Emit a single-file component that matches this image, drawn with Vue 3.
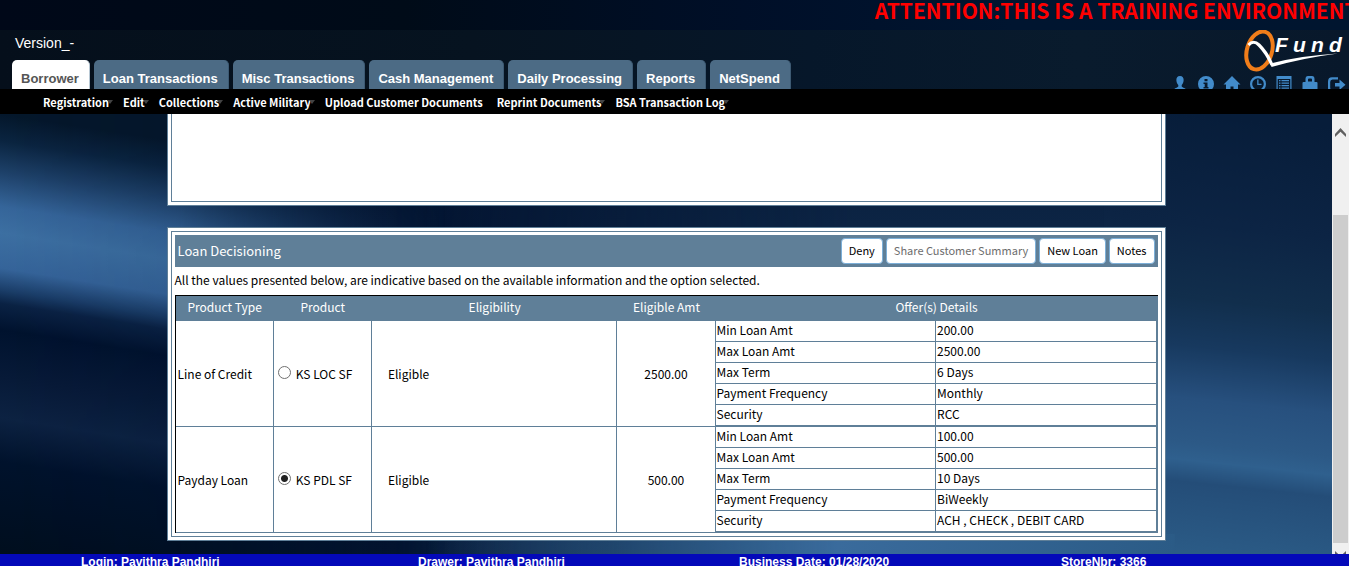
<script setup>
import { ref } from 'vue'

const tabs = ['Borrower', 'Loan Transactions', 'Misc Transactions', 'Cash Management', 'Daily Processing', 'Reports', 'NetSpend']
const menu = [
  { label: 'Registration', arrow: true },
  { label: 'Edit', arrow: true },
  { label: 'Collections', arrow: true },
  { label: 'Active Military', arrow: true },
  { label: 'Upload Customer Documents', arrow: false },
  { label: 'Reprint Documents', arrow: true },
  { label: 'BSA Transaction Log', arrow: true }
]
const columns = ['Product Type', 'Product', 'Eligibility', 'Eligible Amt', 'Offer(s) Details']
const loans = [
  {
    type: 'Line of Credit', product: 'KS LOC SF', status: 'Eligible', amount: '2500.00',
    offers: [['Min Loan Amt', '200.00'], ['Max Loan Amt', '2500.00'], ['Max Term', '6 Days'], ['Payment Frequency', 'Monthly'], ['Security', 'RCC']]
  },
  {
    type: 'Payday Loan', product: 'KS PDL SF', status: 'Eligible', amount: '500.00',
    offers: [['Min Loan Amt', '100.00'], ['Max Loan Amt', '500.00'], ['Max Term', '10 Days'], ['Payment Frequency', 'BiWeekly'], ['Security', 'ACH , CHECK , DEBIT CARD']]
  }
]
const selected = ref('KS PDL SF')
const session = ['Login: Pavithra Pandhiri', 'Drawer: Pavithra Pandhiri', 'Business Date: 01/28/2020', 'StoreNbr: 3366']
</script>

<template>
  <div class="page">
    <header class="top">
      <div class="notice"><span>ATTENTION:THIS IS A TRAINING ENVIRONMENT</span></div>
      <div class="bar">
        <div class="bar-left">
          <div class="version">Version_-</div>
          <nav class="tabs">
            <a v-for="(t, i) in tabs" :key="t" href="#" class="tab" :class="{ active: i === 0 }">{{ t }}</a>
          </nav>
        </div>
        <div class="bar-right">
          <svg class="logo" viewBox="0 0 110 42" width="110" height="42" role="img" aria-label="QFund">
            <ellipse cx="20.500" cy="20.500" rx="12.500" ry="19.500" transform="rotate(17 20.5 20.5)" fill="none" stroke="#f07d1a" stroke-width="4" />
            <path d="M9.500 15Q14.500 9.500 20 15Q28 23 33 35" fill="none" stroke="#fff" stroke-width="3.200" />
            <path d="M31.500 33.500Q62 25.500 99 23.500Q64 28 32.500 37Z" fill="#fff" />
            <text class="logo-text" y="22" x="36 54 72 90">Fund</text>
          </svg>
          <div class="icons">
            <a href="#" aria-label="User"><svg viewBox="0 0 16 16"><path d="M8 0C5 0 4.200 2.200 4.400 4.500C4.500 6.500 5.500 8 6.300 9V10.500C6 11.500 2.500 12 2 13.500V16H14V13.500C13.500 12 10 11.500 9.700 10.500V9C10.500 8 11.500 6.500 11.600 4.500C11.800 2.200 11 0 8 0Z" /></svg></a>
            <a href="#" aria-label="Information"><svg viewBox="0 0 16 16"><path fill-rule="evenodd" d="M8 0A8 8 0 1 0 8 16A8 8 0 1 0 8 0ZM6.500 3H9.500V5.200H6.500ZM5.500 6.500H9.500V11H10.500V12.500H5.500V11H6.700V8H5.500Z" /></svg></a>
            <a href="#" aria-label="Home"><svg viewBox="0 0 16 16"><path d="M8 0L16.500 8.500H14V16H9.500V10.500H6.500V16H2V8.500H-0.500Z" /></svg></a>
            <a href="#" aria-label="Clock"><svg viewBox="0 0 16 16"><circle cx="8" cy="8" r="6.900" fill="none" stroke="#428bca" stroke-width="2.200" /><path d="M7.200 3.500H8.500V7.800H11.500V9H7.200Z" /></svg></a>
            <a href="#" aria-label="List"><svg viewBox="0 0 16 16"><path fill-rule="evenodd" d="M0.500 0H15.500V16H0.500ZM1.700 3V15H14.300V3Z" /><path d="M3 4h1.500v1.200H3zM5.500 4h7.500v1.200H5.500zM3 6.500h1.500v1.200H3zM5.500 6.500h7.500v1.200H5.500zM3 9h1.500v1.200H3zM5.500 9h7.500v1.200H5.500zM3 11.500h1.500v1.200H3zM5.500 11.500h7.500v1.200H5.500z" /></svg></a>
            <a href="#" aria-label="Lock"><svg viewBox="0 0 16 16"><path fill-rule="evenodd" d="M3.500 6V3Q3.500 0 6 0H10Q12.500 0 12.500 3V6H14.500Q15.500 6 15.500 7V16H0.500V7Q0.500 6 1.500 6ZM6 5.500H10V3.500Q10 2.500 9 2.500H7Q6 2.500 6 3.500Z" /></svg></a>
            <a href="#" aria-label="Log out"><svg viewBox="0 0 16 16"><path d="M10 1.200H4Q0 1.200 0 5.500V12Q0 16 4 16H9V14H4.500Q2.200 14 2.200 11.500V6Q2.200 3.500 4.500 3.500H10ZM11.500 3.500L17.500 8.700L11.500 14V10.500H7V7H11.500Z" /></svg></a>
          </div>
        </div>
      </div>
    </header>

    <nav class="menu">
      <a v-for="m in menu" :key="m.label" href="#" :class="{ arrow: m.arrow }">{{ m.label }}</a>
    </nav>

    <div class="body">
      <svg class="backdrop" viewBox="0 0 1332 440" preserveAspectRatio="none" aria-hidden="true">
        <defs>
          <linearGradient id="base" x1="0" y1="0" x2="1" y2="0">
            <stop offset="0" stop-color="#00102a" />
            <stop offset="0.300" stop-color="#031431" />
            <stop offset="1" stop-color="#061c38" />
          </linearGradient>
          <linearGradient id="left" x1="0" y1="0" x2="0" y2="440" gradientUnits="userSpaceOnUse">
            <stop offset="0" stop-color="#04172b" />
            <stop offset="0.060" stop-color="#0a2440" />
            <stop offset="0.130" stop-color="#1d4068" />
            <stop offset="0.210" stop-color="#35659a" />
            <stop offset="0.270" stop-color="#3c6fa2" />
            <stop offset="0.350" stop-color="#35649a" />
            <stop offset="0.400" stop-color="#1a3d68" />
            <stop offset="0.430" stop-color="#0a2244" />
            <stop offset="0.490" stop-color="#00122e" />
            <stop offset="0.600" stop-color="#071a38" />
            <stop offset="0.690" stop-color="#0c2242" />
            <stop offset="0.790" stop-color="#00122c" />
            <stop offset="1" stop-color="#000e1e" />
          </linearGradient>
          <linearGradient id="fadeL" x1="0" x2="1">
            <stop offset="0" stop-color="#fff" />
            <stop offset="0.400" stop-color="#fff" stop-opacity="0.900" />
            <stop offset="1" stop-color="#fff" stop-opacity="0" />
          </linearGradient>
          <mask id="maskL"><rect width="440" height="440" fill="url(#fadeL)" /></mask>
          <linearGradient id="right" x1="0" y1="0" x2="0" y2="440" gradientUnits="userSpaceOnUse">
            <stop offset="0" stop-color="#071d3a" />
            <stop offset="0.250" stop-color="#0c2444" />
            <stop offset="0.420" stop-color="#112e4c" />
            <stop offset="0.530" stop-color="#17395f" />
            <stop offset="0.650" stop-color="#27507e" />
            <stop offset="0.750" stop-color="#2c5986" />
            <stop offset="0.790" stop-color="#2f608e" />
            <stop offset="0.840" stop-color="#244d78" />
            <stop offset="1" stop-color="#2b5b86" />
          </linearGradient>
          <linearGradient id="fadeR" x1="0" x2="1">
            <stop offset="0" stop-color="#fff" stop-opacity="0" />
            <stop offset="0.480" stop-color="#fff" />
            <stop offset="1" stop-color="#fff" />
          </linearGradient>
          <mask id="maskR"><rect x="390" width="942" height="440" fill="url(#fadeR)" /></mask>
          <linearGradient id="glow" x1="0" x2="1">
            <stop offset="0" stop-color="#3b6d9f" stop-opacity="0" />
            <stop offset="0.250" stop-color="#2a5580" stop-opacity="0.500" />
            <stop offset="0.550" stop-color="#3a6b9c" />
            <stop offset="1" stop-color="#2b5b86" />
          </linearGradient>
        </defs>
        <rect width="1332" height="440" fill="url(#base)" />
        <g mask="url(#maskL)"><rect y="-100" width="440" height="640" fill="url(#left)" transform="skewY(9)" /></g>
        <g mask="url(#maskR)"><rect x="-100" y="-60" width="300" height="560" fill="url(#right)" transform="translate(1150 -4) skewY(6)" /><rect x="390" y="-20" width="700" height="500" fill="url(#right)" /></g>
        <rect x="420" y="420" width="740" height="20" fill="url(#glow)" />
      </svg>

      <main class="content">
        <section class="panel cut"><div class="inner"></div></section>
        <section class="panel">
          <div class="inner">
            <div class="title">
              <h2>Loan Decisioning</h2>
              <button type="button">Deny</button>
              <button type="button" disabled>Share Customer Summary</button>
              <button type="button">New Loan</button>
              <button type="button">Notes</button>
            </div>
            <p class="note">All the values presented below, are indicative based on the available information and the option selected.</p>
            <table class="grid">
              <colgroup><col class="c10"><col class="c10"><col class="c25"><col class="c10"><col class="c45"></colgroup>
              <thead>
                <tr><th v-for="c in columns" :key="c" scope="col">{{ c }}</th></tr>
              </thead>
              <tbody>
                <tr v-for="l in loans" :key="l.type">
                  <td>{{ l.type }}</td>
                  <td>
                    <label class="choice"><input v-model="selected" type="radio" name="product" :value="l.product"><span>{{ l.product }}</span></label>
                  </td>
                  <td class="status">{{ l.status }}</td>
                  <td class="amount">{{ l.amount }}</td>
                  <td class="nested">
                    <table class="offers">
                      <tbody>
                        <tr v-for="o in l.offers" :key="o[0]"><td>{{ o[0] }}</td><td>{{ o[1] }}</td></tr>
                      </tbody>
                    </table>
                  </td>
                </tr>
              </tbody>
            </table>
          </div>
        </section>
      </main>

      <div class="scrollbar" aria-hidden="true">
        <svg class="up" viewBox="0 0 11 9" width="11" height="9"><path d="M0 9V6L5.500 0L11 6V9L5.500 3.800Z" fill="#606060" /></svg>
        <div class="thumb"></div>
        <svg class="down" viewBox="0 0 11 9" width="11" height="9"><path d="M0 0V3L5.500 9L11 3V0L5.500 5.200Z" fill="#606060" /></svg>
      </div>
    </div>

    <footer class="foot"><span v-for="s in session" :key="s">{{ s }}</span></footer>
  </div>
</template>

<style>
body {
  margin: 0;
  background: #00102a;
}
</style>

<style scoped>
* {
  box-sizing: border-box;
}
.page {
  display: flex;
  flex-direction: column;
  height: 100vh;
  overflow: hidden;
  font-family: "Noto Sans CJK SC", "Noto Sans", sans-serif;
  font-size: 12px;
  color: #000;
}
a {
  color: inherit;
  text-decoration: none;
}
.top {
  flex: none;
  background: linear-gradient(90deg, #000818 0%, #000b18 30%, #000f28 55%, #001530 75%, #00152f 100%);
}
.notice {
  display: flex;
  height: 30px;
  overflow: hidden;
  padding-left: calc(65% - 2px);
  color: #f00;
  font-size: 21px;
  font-weight: 700;
  line-height: 20px;
  white-space: nowrap;
}
.bar {
  display: flex;
  justify-content: space-between;
  height: 59px;
  overflow: hidden;
  padding-left: 12px;
  background: linear-gradient(90deg, #050f1b 0%, #061320 35%, #06172a 60%, #091b2d 80%, #08182b 100%);
}
.bar-left {
  display: flex;
  flex-direction: column;
  justify-content: space-between;
  font-family: "Liberation Sans", Arial, sans-serif;
}
.version {
  padding: 5px 3px 0;
  color: #fff;
  font-size: 14px;
  line-height: 16px;
}
.tabs {
  display: flex;
  gap: 4px;
}
.tab {
  height: 29px;
  padding: 11px 10px 0 9px;
  border: solid #3d5a73;
  border-width: 0 1px 0 0;
  border-radius: 5px 5px 0 0;
  background: #4c6b85;
  color: #fff;
  font-size: 13px;
  font-weight: 700;
  line-height: 16px;
  white-space: nowrap;
}
.tab.active {
  border-color: #b8c8d4;
  background: #fff;
  color: #555;
}
.bar-right {
  display: flex;
  flex-direction: column;
  align-items: flex-end;
  gap: 4px;
  flex: none;
}
.logo {
  display: block;
  flex: none;
  overflow: hidden;
}
.logo-text {
  fill: #fff;
  font: italic 700 21px "Liberation Sans Narrow", "Liberation Sans", sans-serif;
}
.icons {
  display: flex;
  gap: 10px;
  padding-right: 5px;
}
.icons svg {
  display: block;
  width: 16px;
  height: 16px;
  overflow: visible;
  fill: #428bca;
}
.menu {
  display: flex;
  flex: none;
  gap: 14px;
  height: 25px;
  padding-left: 43px;
  background: #000;
  color: #fff;
  font-size: 11px;
  font-weight: 700;
  line-height: 26px;
  white-space: nowrap;
}
.menu a {
  position: relative;
}
.menu .arrow::after {
  position: absolute;
  top: 11px;
  right: -4px;
  border: solid transparent;
  border-width: 4px 3px 0;
  border-top-color: #444;
  content: "";
}
.body {
  position: relative;
  display: flex;
  flex: 1;
  min-height: 0;
  overflow: hidden;
}
.backdrop {
  position: absolute;
  inset: 0;
  width: 100%;
  height: 100%;
}
.content {
  position: relative;
  display: flex;
  flex: 1;
  flex-direction: column;
  align-items: center;
  gap: 21px;
}
.panel {
  width: 75%;
  padding: 3px;
  border: 1px solid #5f7f98;
  background: #fff;
}
.inner {
  padding: 3px;
  border: 1px solid #5f7f98;
}
.panel.cut {
  padding-top: 0;
  border-top: 0;
}
.cut .inner {
  height: 88px;
  border-top: 0;
}
.title {
  display: flex;
  align-items: center;
  gap: 3px;
  height: 32px;
  padding: 0 3px;
  background: #5f7f98;
}
.title h2 {
  flex: 1;
  margin: 0;
  padding-bottom: 2px;
  color: #fff;
  font-size: 13px;
  font-weight: 400;
}
.title button {
  height: 26px;
  padding: 0 7px 2px;
  border: 1px solid #7cafd8;
  border-radius: 4px;
  background: #fff;
  color: #000;
  font-family: inherit;
  font-size: 11px;
}
.title button:disabled {
  color: #6d6d6d;
}
.note {
  margin: 0;
  padding-bottom: 2px;
  font-size: 12px;
  line-height: 26px;
}
table {
  width: 100%;
  border-spacing: 0;
}
.grid {
  border: solid #000;
  border-width: 1px 0 0 1px;
  table-layout: fixed;
}
.c10 {
  width: 10%;
}
.c25 {
  width: 25%;
}
.c45 {
  width: 45%;
}
.grid th {
  height: 25px;
  padding: 0 0 3px;
  background: #5f7f98;
  color: #fff;
  font-size: 12px;
  font-weight: 400;
  line-height: 18px;
}
.grid td {
  padding: 0 2px;
  border: solid #5f7f98;
  border-width: 0 1px 1px 0;
}
.grid .status {
  padding-left: 16px;
}
.grid .amount {
  text-align: center;
}
.grid .nested {
  padding: 0;
}
.offers {
  table-layout: fixed;
}
.grid .offers td {
  height: 21px;
  padding: 0 1px 2px;
  line-height: 18px;
}
.choice {
  display: flex;
  align-items: center;
  gap: 5px;
  padding-left: 2px;
}
.choice input {
  width: 13px;
  height: 13px;
  margin: 0 0 2px;
  border: 1px solid #707070;
  border-radius: 50%;
  background: #fff;
  appearance: none;
}
.choice input:checked {
  background: radial-gradient(circle, #222 3px, #fff 4px);
}
.scrollbar {
  position: relative;
  display: flex;
  flex: none;
  flex-direction: column;
  align-items: center;
  width: 17px;
  background: #f0f0f0;
}
.up {
  flex: none;
  margin: 14px 0 78px;
}
.thumb {
  flex: 1;
  width: 15px;
  background: #cdcdcd;
}
.down {
  flex: none;
  margin: 8px 0 -6px;
}
.foot {
  display: grid;
  flex: none;
  grid-template-columns: 337fr 321fr 322fr 288fr;
  height: 12px;
  overflow: hidden;
  padding-left: 81px;
  background: #0409b9;
  color: #fff;
  font-family: "Liberation Sans", Arial, sans-serif;
  font-size: 12px;
  font-weight: 700;
  line-height: 16px;
}
</style>
